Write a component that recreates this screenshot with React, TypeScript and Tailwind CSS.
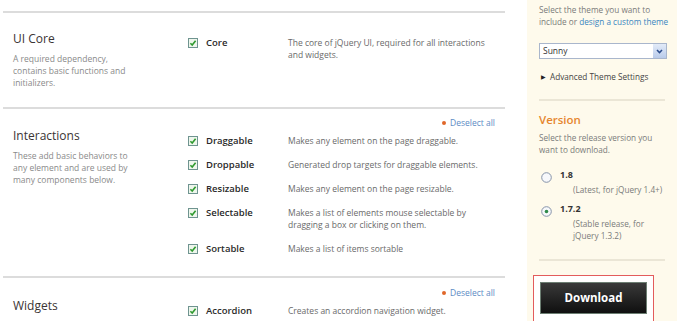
import React from 'react'

const font = { fontFamily: '"Open Sans", "Liberation Sans", sans-serif' }

function Check() {
  return (
    <svg width="10" height="10" viewBox="0 0 10 10" className="shrink-0">
      <rect x="0.5" y="0.5" width="9" height="9" fill="#eef6ec" stroke="#6f9490" />
      <path d="M2.4 5.2 L4.2 7 L7.6 2.8" fill="none" stroke="#2f9a2f" strokeWidth="1.6" />
    </svg>
  )
}

function Radio({ on }: { on?: boolean }) {
  return (
    <svg width="11" height="11" viewBox="0 0 11 11" className="shrink-0">
      <circle cx="5.5" cy="5.5" r="4.8" fill="#f7f8fb" stroke="#8592a8" />
      {on && <circle cx="5.5" cy="5.5" r="1.8" fill="#2f8a4a" />}
    </svg>
  )
}

type Item = { name: string; desc: string[] }

function Row({ item }: { item: Item }) {
  return (
    <div className="flex items-start py-[6px]">
      <div className="h-[12px] flex items-center mr-[8px]">
        <Check />
      </div>
      <div className="w-[82px] text-[9.5px] leading-[12px] font-semibold text-[#2a2a2a]">
        {item.name}
      </div>
      <div className="text-[8.5px] leading-[12px] text-[#6a6a6a]">
        {item.desc.map((l) => (
          <div key={l}>{l}</div>
        ))}
      </div>
    </div>
  )
}

function Deselect() {
  return (
    <div className="flex justify-end items-center h-[12px] pr-[10px] gap-[4px]">
      <span className="w-[4px] h-[4px] rounded-full bg-[#e0672a]" />
      <span className="text-[8.5px] text-[#5b8bc4]">Deselect all</span>
    </div>
  )
}

function Section({
  title,
  desc,
  items,
  deselect,
  className,
}: {
  title: string
  desc: string[]
  items: Item[]
  deselect?: boolean
  className: string
}) {
  return (
    <div className={`border-t-2 border-[#dcdcdc] ${className}`}>
      {deselect && <Deselect />}
      <div className="flex">
        <div className={`w-[185px] pl-[10px] ${deselect ? '' : 'pt-[1px]'}`}>
          <div className="text-[12px] leading-[14px] text-[#3a3434]">{title}</div>
          <div className="mt-[7px] text-[8.5px] leading-[12px] text-[#8a8a8a]">
            {desc.map((l) => (
              <div key={l}>{l}</div>
            ))}
          </div>
        </div>
        <div className="flex-1">
          {items.map((it) => (
            <Row key={it.name} item={it} />
          ))}
        </div>
      </div>
    </div>
  )
}

export default function App() {
  return (
    <div className="w-[682px] h-[321px] overflow-hidden bg-white flex" style={font}>
      <div className="w-[502px] ml-[3px] pt-[11px] shrink-0">
        <Section
          className="pt-[18px] pb-[18px]"
          title="UI Core"
          desc={['A required dependency,', 'contains basic functions and', 'initializers.']}
          items={[
            {
              name: 'Core',
              desc: ['The core of jQuery UI, required for all interactions', 'and widgets.'],
            },
          ]}
        />
        <Section
          className="pt-[8px] pb-[15px]"
          deselect
          title="Interactions"
          desc={['These add basic behaviors to', 'any element and are used by', 'many components below.']}
          items={[
            { name: 'Draggable', desc: ['Makes any element on the page draggable.'] },
            { name: 'Droppable', desc: ['Generated drop targets for draggable elements.'] },
            { name: 'Resizable', desc: ['Makes any element on the page resizable.'] },
            {
              name: 'Selectable',
              desc: ['Makes a list of elements mouse selectable by', 'dragging a box or clicking on them.'],
            },
            { name: 'Sortable', desc: ['Makes a list of items sortable'] },
          ]}
        />
        <Section
          className="pt-[9px]"
          deselect
          title="Widgets"
          desc={[]}
          items={[{ name: 'Accordion', desc: ['Creates an accordion navigation widget.'] }]}
        />
      </div>

      {/* Sidebar */}
      <div className="ml-[22px] w-[150px] h-full shrink-0 bg-[#fefaec] px-[12px] pt-[4px] whitespace-nowrap">
        <div className="text-[8.2px] leading-[12px] text-[#7a7a7a]">
          <div>Select the theme you want to</div>
          <div>
            include or <span className="text-[#3a86c0]">design a custom theme</span>
          </div>
        </div>
        <div className="mt-[15px] h-[16px] w-[128px] border border-[#a9b6cc] bg-white flex items-center">
          <span className="flex-1 pl-[3px] text-[8.5px] text-[#333]">Sunny</span>
          <span className="w-[13px] h-full bg-gradient-to-b from-[#e3ebf8] to-[#b9cbea] flex items-center justify-center">
            <svg width="7" height="5" viewBox="0 0 7 5">
              <path d="M1 1 L3.5 3.6 L6 1" fill="none" stroke="#2c4d8c" strokeWidth="1.5" />
            </svg>
          </span>
        </div>
        <div className="mt-[12px] pl-[2px] flex items-center gap-[4px] h-[12px] text-[8.2px] text-[#444]">
          <span className="text-[6px] text-[#222]">▶</span>
          <span>Advanced Theme Settings</span>
        </div>
        <div className="mt-[16px] h-[2px] bg-[#ebe6d6]" />
        <div className="mt-[12px] text-[11.5px] leading-[14px] font-semibold text-[#e6862e]">Version</div>
        <div className="mt-[5px] text-[8.2px] leading-[12px] text-[#7a7a7a]">
          <div>Select the release version you</div>
          <div>want to download.</div>
        </div>
        <div className="mt-[13px] flex pl-[2px]">
          <div className="h-[14px] flex items-center mr-[8px] mt-[1px]">
            <Radio />
          </div>
          <div>
            <div className="text-[9px] leading-[12px] font-bold text-[#333]">1.8</div>
            <div className="mt-[3px] ml-[13px] text-[8.2px] leading-[12px] text-[#7a7a7a]">
              (Latest, for jQuery 1.4+)
            </div>
          </div>
        </div>
        <div className="mt-[7px] flex pl-[2px]">
          <div className="h-[14px] flex items-center mr-[8px] mt-[1px]">
            <Radio on />
          </div>
          <div>
            <div className="text-[9px] leading-[12px] font-bold text-[#333]">1.7.2</div>
            <div className="mt-[3px] ml-[13px] text-[8.2px] leading-[12px] text-[#7a7a7a]">
              <div>(Stable release, for</div>
              <div>jQuery 1.3.2)</div>
            </div>
          </div>
        </div>
        <div className="mt-[17px] h-[2px] bg-[#ebe6d6]" />
        <div className="mt-[14px] -ml-[6px] w-[121px] h-[47px] border border-[#e35c5c] bg-white px-[6px] pt-[6px]">
          <div className="h-[32px] border border-[#6c7e72] bg-gradient-to-b from-[#3a3a3a] to-[#101010] flex items-center justify-center text-white text-[11.5px] font-bold">
            Download
          </div>
        </div>
      </div>
    </div>
  )
}
